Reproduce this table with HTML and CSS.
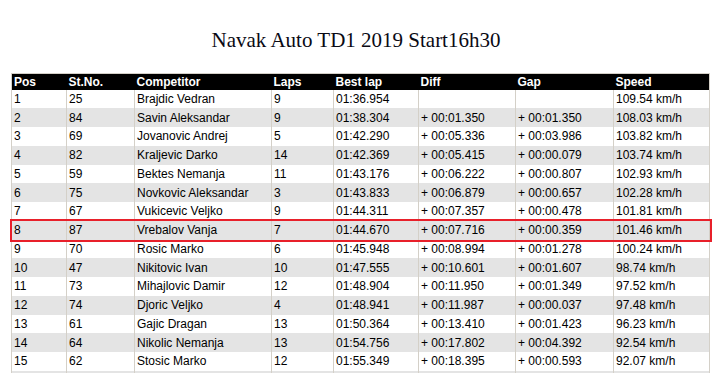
FILE: index.html
```html
<html lang="en">

<head>
    <meta charset="UTF-8">
    <meta name="viewport" content="width=device-width, initial-scale=1.0">
    <title>Navak Auto TD1 2019</title>
    <link rel="stylesheet" href="styles.css">
</head>

<body>
    <h1 class="title">Navak Auto TD1 2019 Start16h30</h1>

    <table class="results">
        <colgroup>
            <col class="c-pos">
            <col class="c-no">
            <col class="c-name">
            <col class="c-laps">
            <col class="c-best">
            <col class="c-diff">
            <col class="c-gap">
            <col class="c-speed">
        </colgroup>
        <thead>
            <tr>
                <th>Pos</th>
                <th>St.No.</th>
                <th>Competitor</th>
                <th>Laps</th>
                <th>Best lap</th>
                <th>Diff</th>
                <th>Gap</th>
                <th>Speed</th>
            </tr>
        </thead>
        <tbody>
            <tr><td>1</td><td>25</td><td>Brajdic Vedran</td><td>9</td><td>01:36.954</td><td></td><td></td><td>109.54 km/h</td></tr>
            <tr><td>2</td><td>84</td><td>Savin Aleksandar</td><td>9</td><td>01:38.304</td><td>+ 00:01.350</td><td>+ 00:01.350</td><td>108.03 km/h</td></tr>
            <tr><td>3</td><td>69</td><td>Jovanovic Andrej</td><td>5</td><td>01:42.290</td><td>+ 00:05.336</td><td>+ 00:03.986</td><td>103.82 km/h</td></tr>
            <tr><td>4</td><td>82</td><td>Kraljevic Darko</td><td>14</td><td>01:42.369</td><td>+ 00:05.415</td><td>+ 00:00.079</td><td>103.74 km/h</td></tr>
            <tr><td>5</td><td>59</td><td>Bektes Nemanja</td><td>11</td><td>01:43.176</td><td>+ 00:06.222</td><td>+ 00:00.807</td><td>102.93 km/h</td></tr>
            <tr><td>6</td><td>75</td><td>Novkovic Aleksandar</td><td>3</td><td>01:43.833</td><td>+ 00:06.879</td><td>+ 00:00.657</td><td>102.28 km/h</td></tr>
            <tr><td>7</td><td>67</td><td>Vukicevic Veljko</td><td>9</td><td>01:44.311</td><td>+ 00:07.357</td><td>+ 00:00.478</td><td>101.81 km/h</td></tr>
            <tr class="marked"><td>8</td><td>87</td><td>Vrebalov Vanja</td><td>7</td><td>01:44.670</td><td>+ 00:07.716</td><td>+ 00:00.359</td><td>101.46 km/h</td></tr>
            <tr><td>9</td><td>70</td><td>Rosic Marko</td><td>6</td><td>01:45.948</td><td>+ 00:08.994</td><td>+ 00:01.278</td><td>100.24 km/h</td></tr>
            <tr><td>10</td><td>47</td><td>Nikitovic Ivan</td><td>10</td><td>01:47.555</td><td>+ 00:10.601</td><td>+ 00:01.607</td><td>98.74 km/h</td></tr>
            <tr><td>11</td><td>73</td><td>Mihajlovic Damir</td><td>12</td><td>01:48.904</td><td>+ 00:11.950</td><td>+ 00:01.349</td><td>97.52 km/h</td></tr>
            <tr><td>12</td><td>74</td><td>Djoric Veljko</td><td>4</td><td>01:48.941</td><td>+ 00:11.987</td><td>+ 00:00.037</td><td>97.48 km/h</td></tr>
            <tr><td>13</td><td>61</td><td>Gajic Dragan</td><td>13</td><td>01:50.364</td><td>+ 00:13.410</td><td>+ 00:01.423</td><td>96.23 km/h</td></tr>
            <tr><td>14</td><td>64</td><td>Nikolic Nemanja</td><td>13</td><td>01:54.756</td><td>+ 00:17.802</td><td>+ 00:04.392</td><td>92.54 km/h</td></tr>
            <tr><td>15</td><td>62</td><td>Stosic Marko</td><td>12</td><td>01:55.349</td><td>+ 00:18.395</td><td>+ 00:00.593</td><td>92.07 km/h</td></tr>
            <tr><td></td><td></td><td></td><td></td><td></td><td></td><td></td><td></td></tr>
        </tbody>
    </table>
</body>

</html>
```

FILE: styles.css
```css
body {
    margin: 0;
    padding: 0 11px;
    background: #ffffff;
    font-family: 'Liberation Sans', Arial, sans-serif;
    color: #000;
}

.title {
    margin: 28px 0 20px 0;
    padding-right: 11px;
    text-align: center;
    font-family: 'Liberation Serif', 'Times New Roman', serif;
    font-weight: normal;
    font-size: 21px;
    line-height: 25px;
    color: #0a0a14;
}

.results {
    width: 699px;
    border-collapse: collapse;
    table-layout: fixed;
    font-size: 12px;
    border: 1px solid #d4d0c8;
}

.c-pos { width: 55px; }
.c-no { width: 68px; }
.c-name { width: 137px; }
.c-laps { width: 62px; }
.c-best { width: 85px; }
.c-diff { width: 97px; }
.c-gap { width: 98px; }
.c-speed { width: 96px; }

.results th {
    background: #000;
    color: #fff;
    font-weight: bold;
    text-align: left;
    height: 16px;
    padding: 0 2px;
    line-height: 14px;
}

.results td {
    height: 18.75px;
    padding: 0 2px;
    line-height: 14px;
    border-left: 1px solid #d4d0c8;
    border-right: 1px solid #d4d0c8;
    white-space: nowrap;
    overflow: hidden;
}

.results tbody tr:nth-child(even) td {
    background: #e4e4e4;
}

.results tr.marked {
    outline: 2px solid #e8202a;
}
```
